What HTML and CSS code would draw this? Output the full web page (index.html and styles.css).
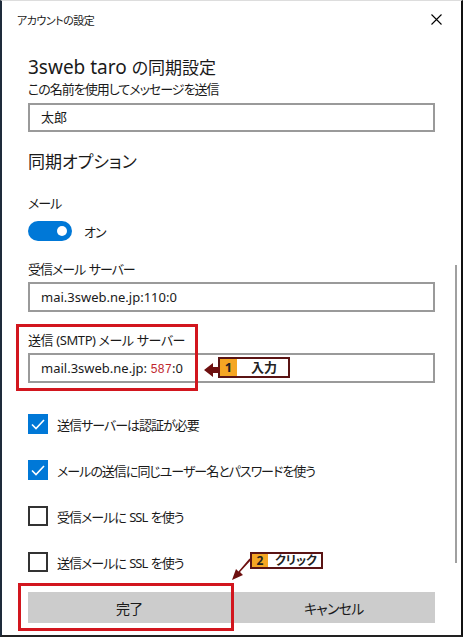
FILE: index.html
```html
<!DOCTYPE html>
<html>
<head>
    <meta charset="UTF-8">
    <title>アカウントの設定</title>
    <link rel="stylesheet" href="styles.css">
</head>
<body>
    <div class="ventana">
        <div class="barra-titulo">
            <span class="titulo">アカウントの設定</span>
            <svg class="cerrar" width="11" height="11" viewBox="0 0 11 11">
                <path d="M0.5 0.5 L10.5 10.5 M10.5 0.5 L0.5 10.5" stroke="#000" stroke-width="1.1" fill="none"/>
            </svg>
        </div>

        <div class="contenido">
            <h1 class="encabezado">3sweb taro <span class="jp">の同期設定</span></h1>
            <div class="subtitulo">この名前を使用してメッセージを送信</div>
            <div class="campo campo-nombre">太郎</div>

            <h2 class="seccion">同期オプション</h2>

            <div class="etiqueta etiqueta-mail">メール</div>
            <div class="fila-toggle">
                <span class="toggle"><span class="perilla"></span></span>
                <span class="toggle-texto">オン</span>
            </div>

            <div class="etiqueta">受信メール サーバー</div>
            <div class="campo">mai.3sweb.ne.jp:110:0</div>

            <div class="etiqueta etiqueta-smtp">送信 (SMTP) メール サーバー</div>
            <div class="campo">mail.3sweb.ne.jp: <span class="puerto">587</span>:0</div>

            <div class="casillas">
                <div class="casilla">
                    <span class="caja marcada">
                        <svg width="20" height="20" viewBox="0 0 20 20"><path d="M4 10.5 L8 14.5 L16 6" stroke="#fff" stroke-width="1.6" fill="none"/></svg>
                    </span>
                    <span>送信サーバーは認証が必要</span>
                </div>
                <div class="casilla">
                    <span class="caja marcada">
                        <svg width="20" height="20" viewBox="0 0 20 20"><path d="M4 10.5 L8 14.5 L16 6" stroke="#fff" stroke-width="1.6" fill="none"/></svg>
                    </span>
                    <span>メールの送信に同じユーザー名とパスワードを使う</span>
                </div>
                <div class="casilla">
                    <span class="caja"></span>
                    <span>受信メールに SSL を使う</span>
                </div>
                <div class="casilla">
                    <span class="caja"></span>
                    <span>送信メールに SSL を使う</span>
                </div>
            </div>

            <div class="botones">
                <button class="boton">完了</button>
                <button class="boton">キャンセル</button>
            </div>
        </div>

        <!-- barra de desplazamiento -->
        <div class="scroll"></div>

        <!-- anotaciones sobre la captura -->
        <div class="marco-rojo marco-smtp"></div>
        <div class="marco-rojo marco-boton"></div>

        <div class="nota nota-1">
            <svg class="flecha-1" width="16" height="16" viewBox="0 0 16 16">
                <path d="M0 8 L9 1 L9 5 L16 5 L16 11 L9 11 L9 15 Z" fill="#6e1010"/>
            </svg>
            <span class="nota-num">1</span><span class="nota-texto">入力</span>
        </div>

        <div class="nota nota-2">
            <span class="nota-num">2</span><span class="nota-texto">クリック</span>
        </div>
        <svg class="flecha-2" width="22" height="24" viewBox="0 0 22 24">
            <path d="M20 2 L9 14 L12 17 L1 22 L5 11 L7.5 13.5 L18.5 0.5 Z" fill="#6e1010"/>
        </svg>
    </div>
</body>
</html>
```

FILE: styles.css
```css
body {
    margin: 0;
    padding: 0;
    background-color: #fff;
    font-family: "Noto Sans", "Noto Sans CJK JP", sans-serif;
    font-feature-settings: "palt";
    color: #1a1a1a;
}

.ventana {
    position: relative;
    width: 459px;
    height: 634px;
    border-left: 2px solid #1e2b3b;
    border-right: 2px solid #111;
    border-bottom: 2px solid #222;
    border-top: 1px solid #ddd;
    box-sizing: content-box;
    overflow: hidden;
}

.barra-titulo {
    height: 37px;
    display: flex;
    align-items: center;
    justify-content: space-between;
    padding: 0 19px 0 15px;
}

.titulo {
    font-size: 11px;
    letter-spacing: -0.5px;
}

.contenido {
    padding: 0 26px;
    display: flex;
    flex-direction: column;
}

.encabezado {
    margin: 17px 0 0 0;
    font-size: 19px;
    font-weight: normal;
    line-height: 24px;
}

.encabezado .jp {
    font-size: 17px;
}

.subtitulo {
    font-size: 13px;
    letter-spacing: -1px;
    line-height: 18px;
}

.campo {
    height: 26px;
    border: 2px solid #9a9a9a;
    margin-top: 3px;
    padding-left: 11px;
    font-size: 13px;
    line-height: 26px;
}

.campo-nombre {
    margin-top: 5px;
    height: 25px;
    line-height: 25px;
}

.puerto {
    font-family: "Liberation Mono", monospace;
    font-size: 12px;
    color: #c0262d;
}

.seccion {
    margin: 17px 0 0 0;
    font-size: 17px;
    font-weight: normal;
    line-height: 26px;
}

.etiqueta {
    margin-top: 18px;
    font-size: 13px;
    letter-spacing: -1px;
    word-spacing: 1px;
    line-height: 20px;
}

.etiqueta-smtp {
    letter-spacing: -0.4px;
    word-spacing: 0;
}

.fila-toggle {
    margin-top: 8px;
    height: 20px;
    display: flex;
    align-items: center;
    gap: 12px;
}

.toggle {
    position: relative;
    width: 44px;
    height: 20px;
    border-radius: 10px;
    background-color: #0078d7;
}

.perilla {
    position: absolute;
    top: 5px;
    right: 5px;
    width: 10px;
    height: 10px;
    border-radius: 50%;
    background-color: #fff;
}

.toggle-texto {
    font-size: 13px;
    letter-spacing: -1px;
}

.casillas {
    margin-top: 31px;
    display: flex;
    flex-direction: column;
    gap: 26px;
}

.casilla {
    height: 20px;
    display: flex;
    align-items: center;
    gap: 9px;
    font-size: 13px;
    letter-spacing: -1px;
    word-spacing: 1px;
}

.caja {
    width: 20px;
    height: 20px;
    box-sizing: border-box;
    border: 2px solid #333;
    flex-shrink: 0;
}

.caja.marcada {
    border: none;
    background-color: #0078d7;
}

.caja svg {
    display: block;
}

.botones {
    margin-top: 20px;
    display: flex;
    gap: 2px;
}

.boton {
    flex: 1;
    height: 31px;
    border: none;
    background-color: #cccccc;
    font-family: "Noto Sans", "Noto Sans CJK JP", sans-serif;
    font-feature-settings: "palt";
    font-size: 14px;
    letter-spacing: -0.8px;
    color: #1a1a1a;
    padding: 0;
}

.scroll {
    position: absolute;
    left: 453px;
    top: 264px;
    width: 2px;
    height: 298px;
    background-color: #a0a0a0;
}

.marco-rojo {
    position: absolute;
    border: 3px solid #d2161e;
    box-sizing: border-box;
}

.marco-smtp {
    left: 14px;
    top: 323px;
    width: 182px;
    height: 67px;
}

.marco-boton {
    left: 16px;
    top: 582px;
    width: 216px;
    height: 48px;
}

.nota {
    position: absolute;
    display: flex;
    align-items: stretch;
    border: 2px solid #5a1414;
    background-color: #fff;
    font-size: 13px;
    font-weight: bold;
}

.nota-1 {
    left: 216px;
    top: 356px;
    width: 68px;
    height: 17px;
}

.nota-2 {
    left: 248px;
    top: 551px;
    width: 69px;
    height: 13px;
    font-size: 12px;
}

.nota-num {
    width: 17px;
    background-color: #f5a623;
    color: #222;
    text-align: center;
    line-height: 17px;
}

.nota-2 .nota-num {
    line-height: 13px;
    width: 16px;
}

.nota-texto {
    flex: 1;
    padding-left: 14px;
    line-height: 17px;
    color: #222;
}

.nota-2 .nota-texto {
    padding-left: 7px;
    line-height: 13px;
}

.flecha-1 {
    position: absolute;
    left: -16px;
    top: 3px;
}

.flecha-2 {
    position: absolute;
    left: 229px;
    top: 557px;
}
```
